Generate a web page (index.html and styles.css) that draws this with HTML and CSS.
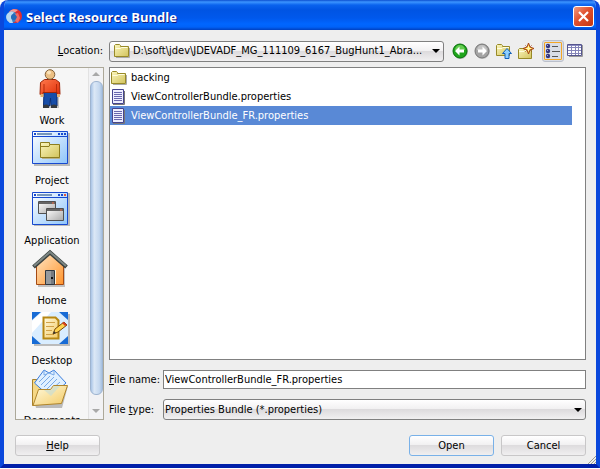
FILE: index.html
```html
<!DOCTYPE html>
<html lang="en">
<head>
  <meta charset="UTF-8">
  <meta name="viewport" content="width=device-width, initial-scale=1.0">
  <title>Select Resource Bundle</title>
  <link rel="stylesheet" href="styles.css">
</head>
<body>
  <!-- shared gradients and small icons -->
  <svg class="defs" width="0" height="0" aria-hidden="true">
    <defs>
      <linearGradient id="win" x1="0" y1="0" x2="1" y2="1"><stop offset="0" stop-color="#fff"/><stop offset="1" stop-color="#8ec5fb"/></linearGradient>
      <linearGradient id="yellow" x1="0" y1="0" x2="1" y2="1"><stop offset="0" stop-color="#fbf6bd"/><stop offset="1" stop-color="#d2c35c"/></linearGradient>
      <linearGradient id="orange" x1="0" y1="0" x2="1" y2="1"><stop offset="0" stop-color="#ffe6c4"/><stop offset="1" stop-color="#ff942c"/></linearGradient>
      <linearGradient id="gray" x1="0" y1="0" x2="1" y2="1"><stop offset="0" stop-color="#fff"/><stop offset="1" stop-color="#a9a9a9"/></linearGradient>
      <linearGradient id="red" x1="0" y1="0" x2="1" y2="1"><stop offset="0" stop-color="#ff7a4d"/><stop offset="1" stop-color="#e02e08"/></linearGradient>
      <linearGradient id="gold" x1="0" y1="0" x2="1" y2="1"><stop offset="0" stop-color="#fffbe0"/><stop offset="1" stop-color="#f3ca64"/></linearGradient>
      <symbol id="folder" viewBox="0 0 16 16">
        <path d="M2 14.500h13.500V5" fill="none" stroke="#aaa"/>
        <path d="M.5 13.500V2.500l1-1h4l1 1v1h8v10z" fill="url(#yellow)" stroke="#988a28"/>
        <path d="M1.500 5.500h5l1-1h6" fill="none" stroke="#fffde0"/>
      </symbol>
      <symbol id="file" viewBox="0 0 16 16">
        <path d="M2 15.500h11.500V2" fill="none" stroke="#777"/>
        <path d="M1.500.5h11v14h-11z" fill="#eeeefe" stroke="#45448f"/>
        <path d="M3 3.500h8M3 5.500h8M3 7.500h8M3 9.500h8M3 11.500h8" stroke="#6867ae"/>
      </symbol>
    </defs>
  </svg>

  <div class="dialog">
    <header class="titlebar">
      <svg class="logo" width="16" height="16" viewBox="0 0 16 16">
        <circle cx="9" cy="7" r="7" fill="#e22d30"/>
        <path d="M3 3a7 7 0 0 1 9-2L8 4z" fill="#f79a94"/>
        <circle cx="6" cy="8" r="5.500" fill="#3a83c9"/>
        <path d="M1 5a6 6 0 0 1 7-2L5 8l2 6a6 6 0 0 1-6-9z" fill="#b9d9f1"/>
        <circle cx="8" cy="8" r="3" fill="#246cb9"/>
        <path d="M9 5l2 3-2 4 3 2 2-5-2-5z" fill="#ed6b68"/>
      </svg>
      <h1>Select Resource Bundle</h1>
      <button type="button" class="close" aria-label="Close">
        <svg width="13" height="13" viewBox="0 0 13 13"><path d="M2 2l9 9M11 2l-9 9" stroke="#fff" stroke-width="2.200"/></svg>
      </button>
    </header>

    <form class="content">
      <div class="location">
        <label for="location"><u>L</u>ocation:</label>
        <div class="combo">
          <svg width="16" height="16"><use href="#folder"/></svg>
          <select id="location">
            <option>D:\soft\jdev\JDEVADF_MG_111109_6167_BugHunt1_Abra...</option>
          </select>
        </div>
        <div class="tools">
          <button type="button" aria-label="Back">
            <svg width="16" height="16" viewBox="0 0 16 16"><circle cx="8.500" cy="8.500" r="7.500" fill="#bbb"/><circle cx="8" cy="8" r="7" fill="#20a51c" stroke="#08720a"/><path d="M3 7a5 5 0 0 1 10 0z" fill="#65cc50"/><path d="M3 8l4.500-4.500v3H12v3H7.500v3z" fill="#fff"/></svg>
          </button>
          <button type="button" aria-label="Forward">
            <svg width="16" height="16" viewBox="0 0 16 16"><circle cx="8.500" cy="8.500" r="7.500" fill="#ccc"/><circle cx="8" cy="8" r="7" fill="#a4a4a4" stroke="#777"/><path d="M3 7a5 5 0 0 1 10 0z" fill="#c4c4c4"/><path d="M13 8L8.500 3.500v3H4v3h4.500v3z" fill="#fff"/></svg>
          </button>
          <button type="button" aria-label="Up one level">
            <svg width="16" height="16" viewBox="0 0 16 16"><path d="M.5 12.500v-10l1-1h4l1 1v1h7v9z" fill="url(#yellow)" stroke="#988a28"/><path d="M1 5.500h5l1-1h6" fill="none" stroke="#fffde0"/><path d="M11 5.500L6.500 10.500h2.500v5h4v-5h2.500z" fill="#8fd0ff" stroke="#1260ba"/></svg>
          </button>
          <button type="button" aria-label="New folder">
            <svg width="16" height="16" viewBox="0 0 16 16"><path d="M.5 15.500v-9l1-1h4l1 1h7v9z" fill="url(#yellow)" stroke="#988a28"/><path d="M1 8.500h5l1-1h6" fill="none" stroke="#fffde0"/><path d="M10.500 0l1.500 4 4 1.500-4 1.500-1.500 4L9 7 5 5.500 9 4z" fill="#ffde4a" stroke="#a3401a"/><path d="M7.500 2.500l1 1M13.500 2.500l-1 1M7.500 8.500l1-1M13.500 8.500l-1-1" stroke="#a3401a"/><path d="M10.500 3v5M8 5.500h5" stroke="#fff7b4"/></svg>
          </button>
          <button type="button" class="view active" aria-label="List view" aria-pressed="true">
            <svg width="16" height="16" viewBox="0 0 16 16"><g fill="#35357c"><circle cx="3" cy="3" r="2.200"/><circle cx="3" cy="8" r="2.200"/><circle cx="3" cy="13" r="2.200"/></g><path d="M7 3.500h6M7 8.500h8M7 13.500h6" stroke="#555"/><path d="M2 2.500h1M2 7.500h1M2 12.500h1" stroke="#a5a5df"/></svg>
          </button>
          <button type="button" class="view" aria-label="Details view">
            <svg width="16" height="16" viewBox="0 0 16 16"><path d="M2 13.500h13.500V2" fill="none" stroke="#999"/><path d="M.5 1.500h14v11H.5z" fill="#fff" stroke="#55558e"/><path d="M1 2.500h13" stroke="#8c8cc5"/><path d="M1 4.500h13M1 7.500h13M1 10.500h13M4.500 2v10M8.500 2v10M11.500 2v10" stroke="#8484b8"/></svg>
          </button>
        </div>
      </div>

      <div class="browser">
        <nav class="places">
          <ul>
            <li><a href="#">
              <svg width="40" height="44" viewBox="0 0 40 44">
                <path d="M13 25h14v15H14z" fill="#c5c5c5"/>
                <path d="M12 23h13v15h-6l-.5-8-1 8h-6z" fill="#174da8" stroke="#082d77"/>
                <path d="M11 37.500q3-2 6 0V40h-6zM19 37.500q3-2 6 0V40h-6z" fill="#35393e"/>
                <path d="M12.500 11.500h11l4 3 .5 12h-3v-2h-14v2H8l.5-12z" fill="url(#red)" stroke="#9d2408"/>
                <path d="M12 16v8M24.500 16v8" stroke="#b72b0b"/>
                <path d="M8.500 26h3v3h-3zM25 26h3v3h-3z" fill="#e5b06f"/>
                <circle cx="18" cy="6.500" r="4.800" fill="#ecc084" stroke="#80603a"/><circle cx="17" cy="4.500" r="2" fill="#fae3b9"/>
              </svg>
              <span>Work</span></a></li>
            <li><a href="#">
              <svg width="40" height="44" viewBox="0 0 40 44">
                <path d="M2 5h36v33H2z" fill="#b9b9b9"/>
                <path d="M.5 3.500h35v32H.5z" fill="url(#win)" stroke="#1749cf"/>
                <path d="M1 8.500h34" stroke="#1749cf"/><path d="M2 6h2M26 6h2M29 6h2M32 6h2" stroke="#1749cf" stroke-width="2"/><path d="M5 6h15" stroke="#7797ba" stroke-width="2"/>
                <path d="M10 17v14h18V17" fill="#b8b18a"/><path d="M8.500 29.500v-15h9v2h10v13z" fill="url(#yellow)" stroke="#8c7d20"/><path d="M9 18.500h8l1-2" fill="none" stroke="#8c7d20"/>
              </svg>
              <span>Project</span></a></li>
            <li><a href="#">
              <svg width="40" height="44" viewBox="0 0 40 44">
                <path d="M2 5h36v33H2z" fill="#b9b9b9"/>
                <path d="M.5 4.500h35v32H.5z" fill="url(#win)" stroke="#1749cf"/>
                <path d="M1 9.500h34" stroke="#1749cf"/><path d="M2 7h2M26 7h2M29 7h2" stroke="#1749cf" stroke-width="2"/><path d="M32 7h2" stroke="#e0573a" stroke-width="2"/><path d="M5 7h15" stroke="#7797ba" stroke-width="2"/>
                <path d="M6.500 13.500h17v12h-17z" fill="url(#gray)" stroke="#505050"/><path d="M7 15h16" stroke="#656565" stroke-width="2"/><path d="M20 15h2" stroke="#f26c47"/>
                <path d="M14.500 20.500h17v12h-17z" fill="url(#gray)" stroke="#505050"/><path d="M15 22h16" stroke="#656565" stroke-width="2"/><path d="M28 22h2" stroke="#f26c47"/>
              </svg>
              <span>Application</span></a></li>
            <li><a href="#">
              <svg width="40" height="44" viewBox="0 0 40 44">
                <path d="M6 19l14-13 13 13v20H6z" fill="#c1c1c1"/>
                <path d="M4.500 18L18 6l13.500 12v18.500h-27z" fill="url(#orange)" stroke="#a54a13"/>
                <path d="M1.500 19L18 4.500 34.500 19" fill="none" stroke="#3b4240" stroke-width="4"/><path d="M2 18L18 4l16 14" fill="none" stroke="#7d8784" stroke-width="2"/>
                <path d="M22 22h2v14h-2z" fill="#fff4d8"/><path d="M13.500 22.500h9v14h-9z" fill="#777b80" stroke="#303840"/><path d="M14 23h5v13h-5z" fill="#969a9e"/><path d="M19 30h2" stroke="#111" stroke-width="2"/>
              </svg>
              <span>Home</span></a></li>
            <li><a href="#">
              <svg width="40" height="44" viewBox="0 0 40 44">
                <path d="M2 6h36v32H2z" fill="#bbb"/><path d="M0 4h36v32H0z" fill="#176bd5"/>
                <path d="M9 4h18l9 8v16l-9 8H9l-9-8V12z" fill="#d9edff"/><path d="M10 4h9L0 25V13z" fill="#fff"/>
                <path d="M11.500 9.500h12l3 3v18h-15z" fill="url(#gold)" stroke="#b78713" stroke-width="2"/>
                <path d="M14 14.500h9M14 18.500h8M14 22.500h6M14 26.500h8" stroke="#d1a248"/>
                <path d="M21 26l2-5 9-7 3 3-9 7z" fill="#ffd34e" stroke="#794b0b"/><path d="M21 26l1-3 2 2z" fill="#333"/><path d="M30 15l3 3 2-1-3-3z" fill="#d64122"/>
              </svg>
              <span>Desktop</span></a></li>
            <li><a href="#">
              <svg width="40" height="44" viewBox="0 0 40 44">
                <path d="M3 36L36 18l-6 22H4z" fill="#bbb"/>
                <path d="M.5 37.500v-26h6l2 3h12v20z" fill="#f6d886" stroke="#aa822b"/>
                <path d="M2.500 15L12 2l5 3 5-3 12 13-16 14z" fill="#e0f0ff" stroke="#3c7edc"/>
                <path d="M12 2v5l5-2 5 2V2M7 14l8-8M9 17l9-9M12 19l10-10M15 21l10-10M17 24l11-10" fill="none" stroke="#78a9e7"/>
                <path d="M1 37.500l5.500-16h12l3-4h14l-6 18z" fill="url(#gold)" stroke="#b0852b"/>
                <path d="M12 22l7 6 9-10h-6l-3 4z" fill="#cbddd2" opacity=".7"/>
              </svg>
              <span>Documents</span></a></li>
          </ul>
          <div class="scrollbar" aria-hidden="true">
            <i class="arrow up"></i>
            <div class="thumb"></div>
            <i class="arrow down"></i>
          </div>
        </nav>

        <div class="main">
          <ul class="files">
            <li><svg width="16" height="16"><use href="#folder"/></svg>backing</li>
            <li><svg width="16" height="16"><use href="#file"/></svg>ViewControllerBundle.properties</li>
            <li class="selected"><svg width="16" height="16"><use href="#file"/></svg>ViewControllerBundle_FR.properties</li>
          </ul>
          <div class="field">
            <label for="filename"><u>F</u>ile name:</label>
            <input type="text" id="filename" value="ViewControllerBundle_FR.properties">
          </div>
          <div class="field">
            <label for="filetype">File <u>t</u>ype:</label>
            <div class="combo">
              <select id="filetype">
                <option>Properties Bundle (*.properties)</option>
              </select>
            </div>
          </div>
        </div>
      </div>

      <div class="buttons">
        <button type="button" class="btn help"><u>H</u>elp</button>
        <button type="submit" class="btn btn-default">Open</button>
        <button type="button" class="btn">Cancel</button>
      </div>
    </form>
    <svg class="grip" width="9" height="9" viewBox="0 0 9 9"><path d="M1 9l8-8M4 9l5-5M7 9l2-2" stroke="#9c9c8c"/></svg>
  </div>
</body>
</html>
```
FILE: styles.css
```css
* {
  box-sizing: border-box;
}
body {
  margin: 0;
  height: 100vh;
  padding-bottom: 1px;
  background: #fff;
  color: #000;
  font: 11px/16px "DejaVu Sans Condensed", Tahoma, sans-serif;
}
.defs {
  position: absolute;
}
.dialog {
  position: relative;
  display: flex;
  flex-direction: column;
  height: 100%;
  border: solid #0a48dc;
  border-width: 0 4px 4px;
  border-bottom-color: #001fa8;
  border-radius: 8px 8px 0 0;
  background: #eee;
  overflow: hidden;
}
.titlebar {
  display: flex;
  align-items: center;
  gap: 4px;
  height: 30px;
  margin: 0 -4px;
  padding: 3px 6px 0;
  background: linear-gradient(#0c4fd0, #3c95ff 2px, #0a63ee 5px, #0054e3 10px, #0058ec 18px, #0066ff 24px, #0062f8 27px, #0040c0);
}
.titlebar h1 {
  flex: 1;
  margin: 0;
  color: #fff;
  font: bold 13px/20px "Open Sans", sans-serif;
  text-shadow: 1px 1px #0a1883;
}
.close {
  display: grid;
  place-items: center;
  width: 21px;
  height: 21px;
  padding: 0;
  border: 1px solid #fff;
  border-radius: 3px;
  background: linear-gradient(135deg, #f09a7f, #e0502e 45%, #c53712);
}
.content {
  display: flex;
  flex: 1;
  flex-direction: column;
  min-height: 0;
  padding: 10px 10px 8px 11px;
}
select,
input,
button {
  color: inherit;
  font: inherit;
}
u {
  text-underline-offset: 1px;
}
.location {
  display: flex;
  align-items: center;
}
.location label {
  width: 94px;
  padding-right: 6px;
  text-align: right;
}
.combo {
  position: relative;
  display: flex;
  align-items: center;
  flex: 1;
  min-width: 0;
  height: 21px;
  border: 1px solid #808080;
  border-radius: 3px;
  background: linear-gradient(#fff, #f2f1f2 45%, #dddbdd 50%, #f1f0f1);
}
.combo svg {
  flex: none;
  margin-left: 4px;
}
.combo::after {
  content: "";
  position: absolute;
  right: 3px;
  border: 4px solid transparent;
  border-top-color: #000;
  border-bottom: 0;
  pointer-events: none;
}
.combo select {
  flex: 1;
  min-width: 0;
  height: 19px;
  padding: 0 14px 0 1px;
  border: 0;
  background: none;
  appearance: none;
}
.combo svg + select {
  padding-left: 3px;
}
.tools {
  display: flex;
  align-items: center;
  gap: 6px;
  padding: 0 3px 0 8px;
}
.tools button {
  display: grid;
  place-items: center;
  width: 16px;
  height: 20px;
  padding: 0;
  border: 0;
  background: none;
}
.tools .active {
  width: 22px;
  height: 22px;
  margin-left: 2px;
  border: 1px solid #bbc0cb;
  border-radius: 3px;
  outline: 1px solid #f5a623;
  outline-offset: -3px;
  background: #d9dde6;
}
.tools .view + .view {
  margin-left: -3px;
}
.browser {
  display: flex;
  flex: 1;
  gap: 5px;
  min-height: 0;
  margin-top: 5px;
}
.places {
  display: flex;
  width: 89px;
  border: 1px solid #aca899;
  background: #f6f6f6;
  overflow: hidden;
}
.places ul {
  flex: 1;
  margin: 0;
  padding: 0;
  list-style: none;
}
.places li {
  height: 60px;
}
.places a {
  display: flex;
  flex-direction: column;
  align-items: center;
  color: #000;
  text-decoration: none;
}
.places svg {
  flex: none;
}
.places span {
  margin-top: 1px;
}
.scrollbar {
  display: flex;
  flex-direction: column;
  align-items: center;
  width: 15px;
  border-left: 1px solid #e2e2e2;
  background: #f2f2f4;
}
.thumb {
  flex: 1;
  width: 13px;
  border: 1px solid #9eb4d0;
  border-radius: 6px;
  background: linear-gradient(90deg, #a9c4e6, #dce8f6 30%, #c5d8ef 75%, #a6c0e0);
}
.arrow {
  margin: 4px 0 5px;
  border: 4px solid transparent;
}
.up {
  border-top: 0;
  border-bottom-color: #a8a8a8;
}
.down {
  margin: 14px 0 6px;
  border-bottom: 0;
  border-top-color: #a8a8a8;
}
.main {
  display: flex;
  flex: 1;
  flex-direction: column;
  gap: 10px;
  min-width: 0;
}
.files {
  flex: 1;
  margin: 0;
  padding: 0 13px 0 0;
  border: 1px solid #808080;
  background: #fff;
  list-style: none;
}
.files li {
  display: flex;
  align-items: center;
  gap: 4px;
  height: 19px;
  padding-left: 1px;
}
.files .selected {
  background: #5989d6;
  color: #fff;
}
.field {
  display: flex;
  align-items: center;
}
.field label {
  width: 54px;
}
.field input {
  flex: 1;
  min-width: 0;
  height: 19px;
  padding: 0 1px;
  border: 1px solid #808080;
  background: #fff;
}
.buttons {
  display: flex;
  gap: 7px;
  margin-top: 15px;
}
.btn {
  width: 85px;
  height: 21px;
  padding: 0;
  border: 1px solid #c8c7c8;
  border-radius: 3px;
  background: linear-gradient(#fff, #f2f1f2 45%, #dedcde 50%, #f0eff0);
}
.btn-default {
  border-color: #79b1e8;
}
.help {
  margin-right: auto;
}
.grip {
  position: absolute;
  right: 0;
  bottom: 0;
}
```
